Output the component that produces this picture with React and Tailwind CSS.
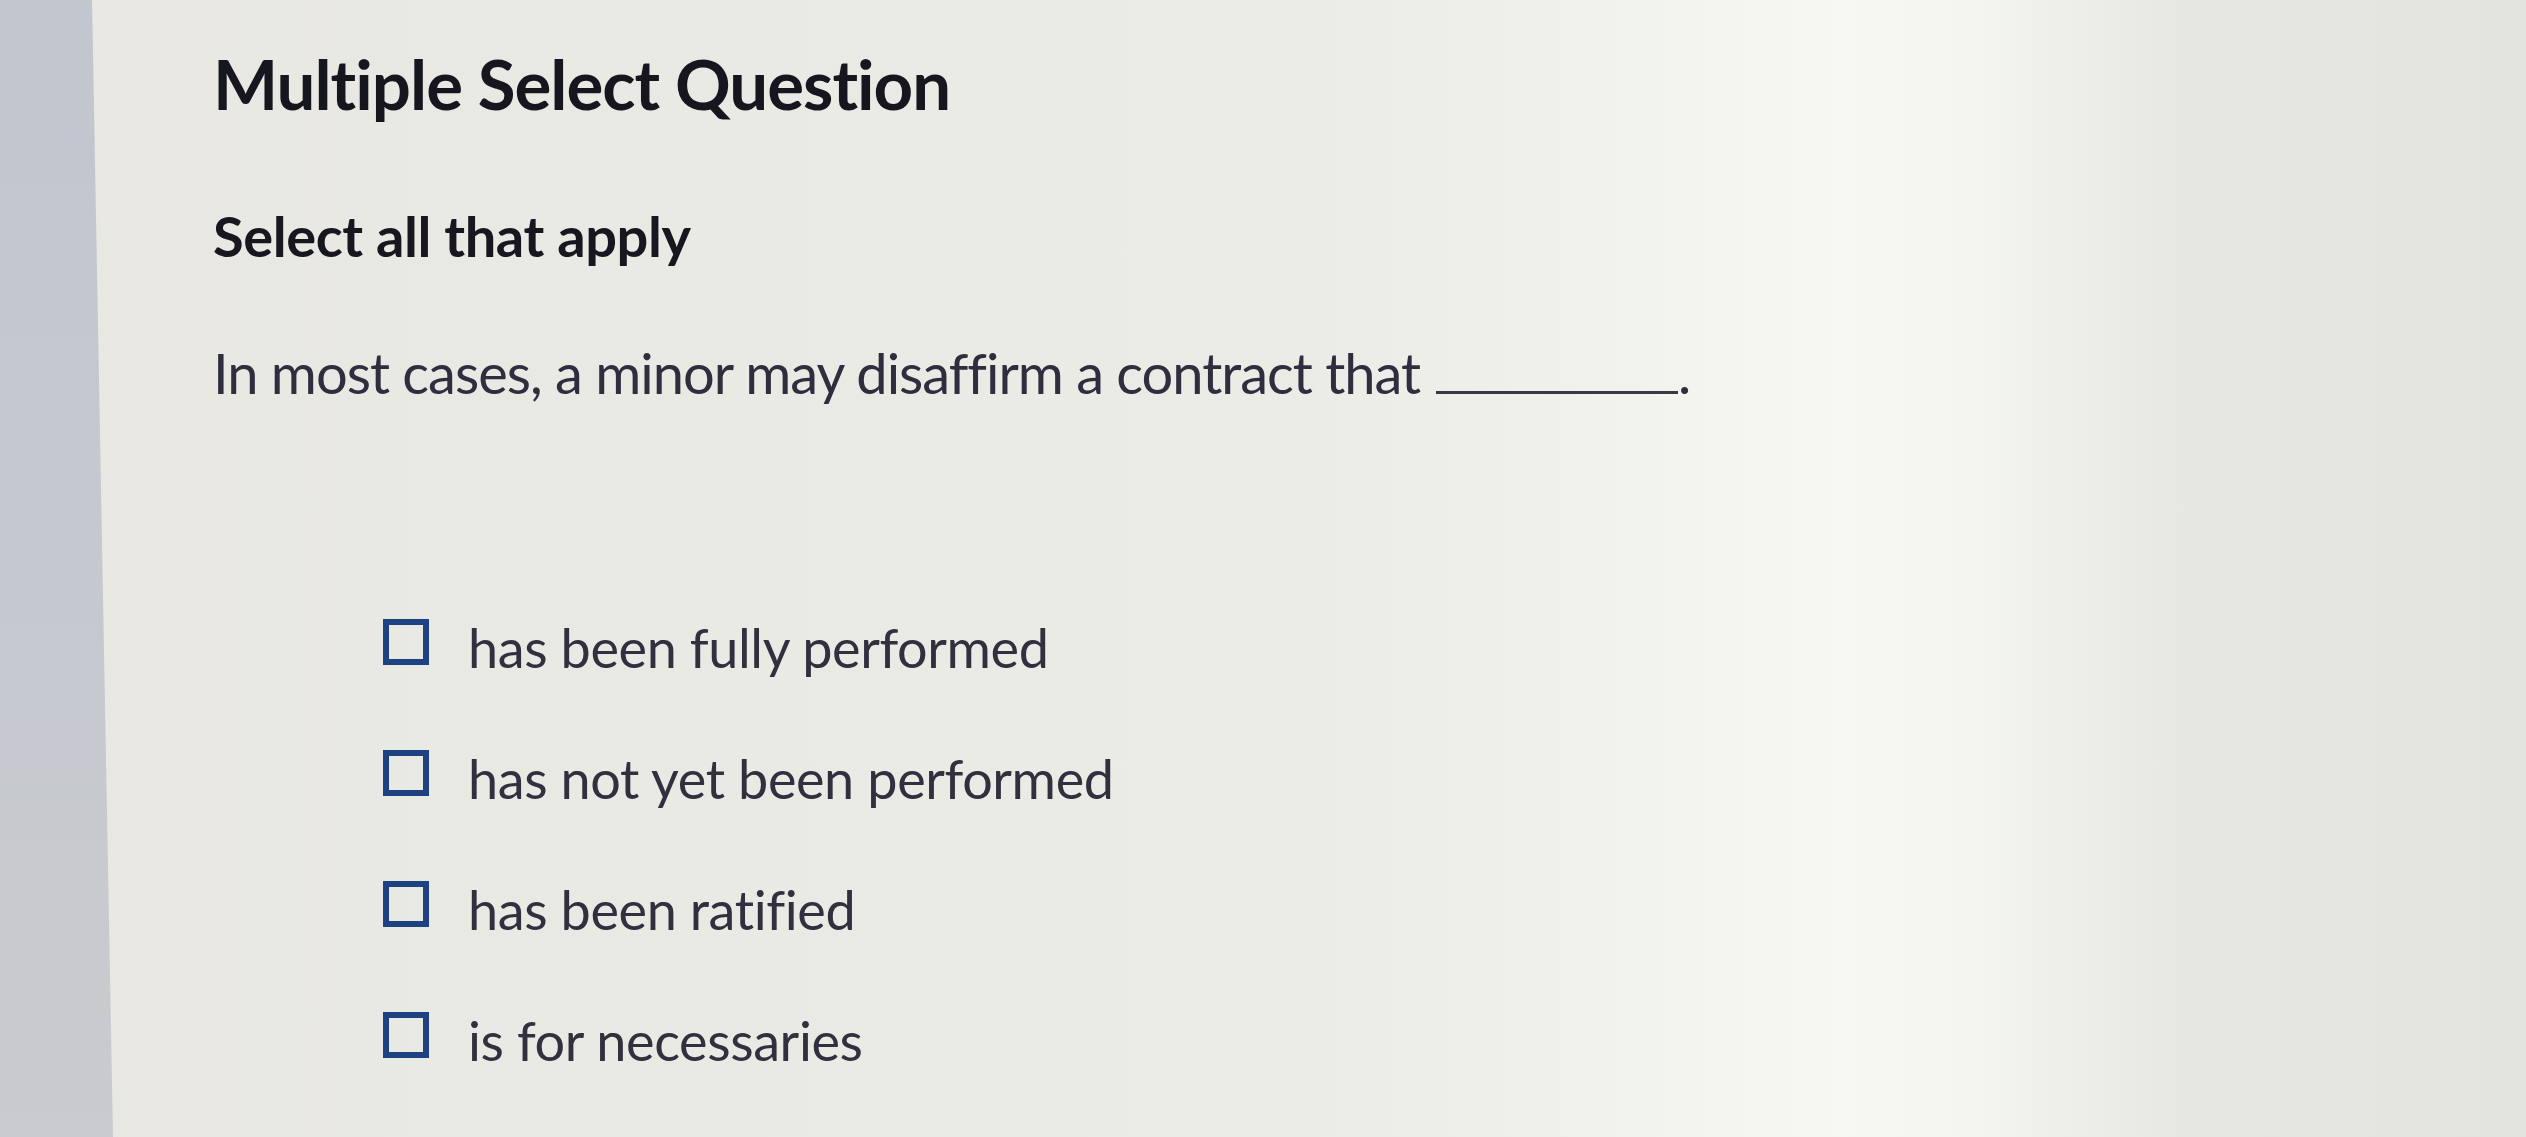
export default function App() {
  const options = [
    "has been fully performed",
    "has not yet been performed",
    "has been ratified",
    "is for necessaries",
  ];
  return (
    <div
      className="flex h-[1137px] w-full overflow-hidden bg-[linear-gradient(90deg,#e8e7e1_0%,#eaeae5_30%,#ecece7_52%,#f2f2ed_64%,#f8f8f3_73%,#f5f5f0_78%,#e8e8e3_86%,#e4e4df_100%)] [font-variant-ligatures:none]"
      style={{ fontFamily: "Lato, 'Open Sans', sans-serif" }}
    >
      <div className="w-[114px] shrink-0 bg-[linear-gradient(180deg,#c1c6cf_0%,#c6c9cf_60%,#c9cbce_100%)] [clip-path:polygon(0_0,92px_0,113px_100%,0_100%)]" />
      <div className="flex flex-1 flex-col pl-[99px] pt-[49px]">
        <h1 className="text-[69px] font-bold leading-none tracking-[-1px] text-[#16161f]">
          Multiple Select Question
        </h1>
        <p className="mt-[90px] text-[56px] font-bold leading-none tracking-[-0.4px] text-[#17171f]">
          Select all that apply
        </p>
        <p className="mt-[81px] text-[56px] leading-none tracking-[-1px] text-[#2e2e3e]">
          In most cases, a minor may disaffirm a contract that
          <span className="ml-[16px] inline-block w-[242px] border-b-[3px] border-[#383846] align-baseline"></span>
          <span>.</span>
        </p>
        <div className="mt-[220px] flex flex-col gap-[77px] pl-[170px]">
          {options.map((o) => (
            <div key={o} className="flex items-start">
              <span className="-mt-[2px] h-[46px] w-[46px] shrink-0 border-[6px] border-[#1c4282]" />
              <span className="ml-[39px] text-[54px] leading-none tracking-[-0.4px] text-[#30303f]">{o}</span>
            </div>
          ))}
        </div>
      </div>
    </div>
  );
}
